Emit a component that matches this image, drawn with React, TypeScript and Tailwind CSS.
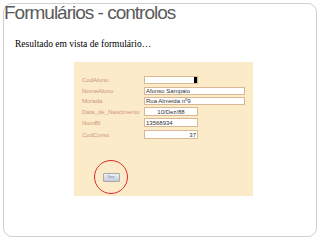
import React from 'react';

const rows = [
  { label: 'CodAluno', value: '', box: 'mt-[14px] h-[8px] w-[54px]', align: 'text-left', cursor: true },
  { label: 'NomeAluno', value: 'Afonso Sampaio', box: 'mt-[3px] h-[8px] w-[101px]', align: 'text-left' },
  { label: 'Morada', value: 'Rua Almeida nº9', box: 'mt-[2px] h-[8px] w-[101px]', align: 'text-left' },
  { label: 'Data_de_Nascimento', value: '10/Dez/88', box: 'mt-[2px] h-[9px] w-[54px]', align: 'text-center' },
  { label: 'NumBI', value: '13568934', box: 'mt-[2px] h-[9px] w-[54px]', align: 'text-left' },
  { label: 'CodCurso', value: '37', box: 'mt-[3px] h-[9px] w-[54px]', align: 'text-right' },
];

function FormRow({ row }: { row: (typeof rows)[number] }) {
  return (
    <div className={`flex items-center ${row.box.split(' ')[0]}`}>
      <div className="w-[70px] pl-[8px] text-[6px] leading-none text-[#cd9580] font-['Liberation_Sans',sans-serif]">
        {row.label}
      </div>
      <div
        className={`relative flex items-center border border-[#d9b893] bg-white px-[1px] text-[6px] leading-none text-[#333] font-['Liberation_Sans',sans-serif] ${row.box.split(' ').slice(1).join(' ')}`}
      >
        <span className={`w-full ${row.align}`}>{row.value}</span>
        {row.cursor && <span className="absolute right-[0px] top-[0px] h-[6px] w-[3px] bg-black" />}
      </div>
    </div>
  );
}

export default function App() {
  return (
    <div className="w-[320px] h-[240px] bg-white p-[3px]">
      <div className="h-full rounded-[9px] border border-[#cfcfcf] flex flex-col">
        <div className="-mt-px text-[19px] leading-none tracking-[-1px] text-[#5a5a5a] font-['Liberation_Sans',sans-serif] h-[19px]">
          Formulários - controlos
        </div>
        <div className="mt-[18px] ml-[11px] h-[10px] text-[9.5px] leading-none text-black font-['Liberation_Serif',serif]">
          Resultado em vista de formulário…
        </div>
        <div className="mt-[12px] ml-[70px] w-[179px] h-[134px] bg-[#fcebc8] flex flex-col">
          {rows.map((r) => (
            <FormRow key={r.label} row={r} />
          ))}
          <div className="mt-[21px] ml-[20px] w-[34px] h-[34px] rounded-full border-[1.5px] border-[#e12a2a] flex items-center justify-center">
            <div className="w-[17px] h-[9px] rounded-[1px] border border-[#a9a9a9] bg-gradient-to-b from-[#eef2f8] to-[#c4ccd8] flex items-center justify-center text-[3px] leading-none text-[#7080a0] font-['Liberation_Sans',sans-serif]">
              Novo
            </div>
          </div>
        </div>
      </div>
    </div>
  );
}
